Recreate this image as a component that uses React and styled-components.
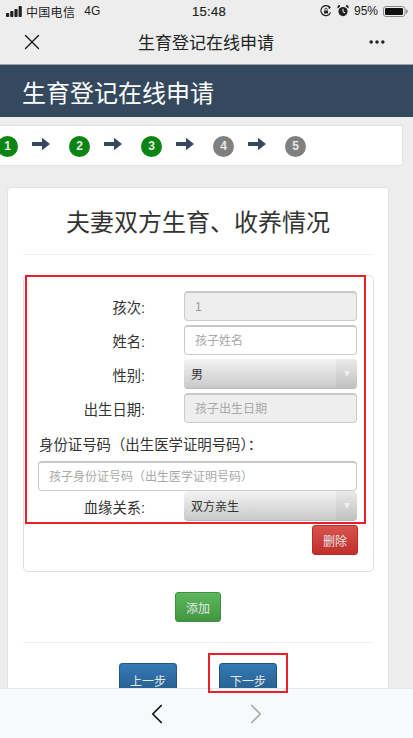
import React from 'react';
import styled, { createGlobalStyle } from 'styled-components';
import { X, MoreHorizontal, ChevronLeft, ChevronRight } from 'lucide-react';

const GlobalStyle = createGlobalStyle`
  html, body {
    margin: 0;
    padding: 0;
    background: #ededed;
  }
  *, *::before, *::after {
    box-sizing: border-box;
  }
  body {
    font-family: "Liberation Sans", "Noto Sans CJK SC", sans-serif;
    color: #333;
  }
`;

const Page = styled.div`
  width: 413px;
  height: 738px;
  display: flex;
  flex-direction: column;
  overflow: hidden;
  background: #ededed;
`;

const StatusBar = styled.div`
  height: 22px;
  padding: 0 5px 0 6px;
  display: grid;
  grid-template-columns: 1fr auto 1fr;
  align-items: center;
  font-size: 12px;
  color: #222;
  flex: none;
`;

const StatusLeft = styled.div`
  display: flex;
  align-items: center;
  gap: 3px;
`;

const Carrier = styled.span`
  margin-right: 6px;
  letter-spacing: 0.3px;
`;

const Clock = styled.div`
  margin-left: 4px;
  font-size: 13px;
  letter-spacing: 0.3px;
  -webkit-text-stroke: 0.2px #222;
`;

const StatusRight = styled.div`
  display: flex;
  align-items: center;
  justify-content: flex-end;
  gap: 5px;
`;

const NavBar = styled.div`
  height: 43px;
  padding: 0 26px 3px 19px;
  display: flex;
  align-items: center;
  justify-content: space-between;
  border-bottom: 1px solid #9aa3ab;
  flex: none;
`;

const NavTitle = styled.div`
  font-size: 17px;
  color: #222;
`;

const Banner = styled.div`
  height: 52px;
  padding: 0 22px;
  display: flex;
  align-items: center;
  background: #34495e;
  color: #fff;
  font-size: 24px;
  flex: none;
`;

const StepsCard = styled.div`
  margin: 8px 10px 0 -6px;
  height: 41px;
  padding-left: 2px;
  display: flex;
  align-items: center;
  background: #fff;
  border: 1px solid #e2e2e2;
  border-radius: 3px;
  flex: none;
`;

const StepItem = styled.div`
  width: 72px;
  display: flex;
  align-items: center;
  gap: 14px;
  margin-top: 1px;
`;

const StepDot = styled.span`
  width: 21px;
  height: 21px;
  border-radius: 50%;
  display: flex;
  align-items: center;
  justify-content: center;
  background: ${({ $done }) => ($done ? '#0a8412' : '#808080')};
  color: #e8e8e8;
  font-size: 12px;
  font-weight: 700;
  flex: none;
`;

const StepArrow = styled.svg`
  width: 18px;
  height: 14px;
  margin-bottom: 5px;
  flex: none;
`;

const Content = styled.div`
  flex: 1;
  min-height: 0;
  padding: 21px 0 0 7px;
`;

const Card = styled.div`
  width: 382px;
  padding: 0 15px;
  background: #fff;
  border: 1px solid #e3e3e3;
  border-radius: 4px 4px 0 0;
`;

const Title = styled.h1`
  margin: 0;
  height: 67px;
  padding-bottom: 2px;
  display: flex;
  align-items: center;
  justify-content: center;
  font-size: 24px;
  font-weight: 400;
  color: #333;
  border-bottom: 1px solid #eee;
`;

const Panel = styled.div`
  margin-top: 20px;
  width: 351px;
  height: 297px;
  border: 1px solid #ddd;
  border-radius: 5px;
`;

const Marked = styled.div`
  margin: -1px 0 0 1px;
  width: 341px;
  height: 249px;
  padding: 14px 6px 0 12px;
  border: 2px solid #e8202c;
`;

const FormRow = styled.div`
  height: 30px;
  margin-bottom: 4px;
  display: grid;
  grid-template-columns: 108px 173px;
  column-gap: 38px;
  align-items: center;
  margin-left: -1px;
`;

const RowLabel = styled.label`
  padding-right: 1px;
  font-size: 14.3px;
  color: #333;
  text-align: right;
`;

const TextInput = styled.input`
  width: 100%;
  height: 30px;
  padding: 0 10px;
  font: 12px "Liberation Sans", "Noto Sans CJK SC", sans-serif;
  color: #999;
  background: ${({ disabled }) => (disabled ? '#eeeeee' : '#fff')};
  border: 1px solid #ccc;
  border-top: 2px solid #c8c8c8;
  border-radius: 4px;
  opacity: 1;
  &::placeholder {
    color: #a8a8a8;
    opacity: 1;
  }
`;

const SelectBox = styled.div`
  height: 30px;
  padding-left: 7px;
  display: flex;
  align-items: center;
  justify-content: space-between;
  font-size: 12px;
  color: #333;
  background: linear-gradient(#f4f4f4, #c9c9c9);
  border-radius: 4px;
  border-bottom: 1px solid #bbb;
`;

const SelectCaret = styled.span`
  width: 21px;
  height: 100%;
  display: flex;
  align-items: center;
  justify-content: center;
  background: rgba(0, 0, 0, 0.04);
  border-radius: 0 4px 4px 0;
  &::after {
    content: "";
    border-left: 3.5px solid transparent;
    border-right: 3.5px solid transparent;
    border-top: 6px solid #efefef;
  }
`;

const WideLabel = styled.div`
  margin: 6px 0 3px 0;
  height: 29px;
  font-size: 14.4px;
  color: #333;
  display: flex;
  align-items: center;
`;

const WideInput = styled(TextInput)`
  display: block;
  width: 319px;
  margin-left: -1px;
  height: 30px;
`;

const LastRow = styled(FormRow)`
  margin-top: 0;
  margin-bottom: 0;
`;

const ActionRow = styled.div`
  display: flex;
  justify-content: flex-end;
  padding: 1px 15px 0 0;
`;

const PrimaryRow = styled.div`
  display: flex;
  justify-content: center;
  padding: 20px 0;
  border-bottom: 1px solid #eee;
`;

const Btn = styled.button`
  width: ${({ $wide }) => ($wide ? '58px' : '46px')};
  height: ${({ $wide }) => ($wide ? '34px' : '30px')};
  padding: 0;
  font: 12px "Liberation Sans", "Noto Sans CJK SC", sans-serif;
  color: #e6e6e6;
  border: 1px solid ${({ $border }) => $border};
  border-radius: 3px;
  background: linear-gradient(${({ $from }) => $from}, ${({ $to }) => $to});
`;

const PagerRow = styled.div`
  display: flex;
  gap: 42px;
  padding: 20px 0 0 96px;
`;

// the red note drawn on the screenshot, it also lies over the bottom bar
const MarkedNext = styled.div`
  position: relative;
  &::after {
    content: "";
    position: absolute;
    top: -10px;
    left: -11px;
    width: 80px;
    height: 40px;
    border: 2px solid #e8202c;
    z-index: 2;
    pointer-events: none;
  }
`;

const BottomBar = styled.div`
  height: 50px;
  padding-left: 140px;
  display: flex;
  align-items: center;
  gap: 65px;
  background: #f8f9fb;
  border-top: 1px solid #e6e6e6;
  flex: none;
  position: relative;
  z-index: 1;
`;

const signalBars = [4, 6, 8, 11];

const SignalIcon = () => (
  <svg width="17" height="11" viewBox="0 0 17 11">
    {signalBars.map((h, i) => (
      <rect key={h} x={i * 4.2} y={11 - h} width="3.2" height={h} rx="0.8" fill="#222" />
    ))}
  </svg>
);

const LockIcon = () => (
  <svg width="12" height="12" viewBox="0 0 12 12" fill="none" stroke="#222">
    <path d="M10.6 7.4A5 5 0 1 1 9.8 2.4" strokeWidth="1.2" />
    <path d="M8.6 1.2l2 1.2-1.6 1.6z" fill="#222" strokeWidth="0.4" />
    <rect x="4" y="5.4" width="4" height="3" rx="0.5" fill="#222" stroke="none" />
    <path d="M4.8 5.4V4.4a1.2 1.2 0 0 1 2.4 0v1" strokeWidth="0.8" />
  </svg>
);

const AlarmIcon = () => (
  <svg width="12" height="12" viewBox="0 0 12 12">
    <circle cx="6" cy="6.6" r="4.6" fill="#222" />
    <path d="M6 3.8v3l2 1" stroke="#fff" strokeWidth="1" fill="none" />
    <path d="M0.8 3L3 0.9 1.4 0.6zM11.2 3L9 0.9l1.6-.3z" fill="#222" stroke="#222" />
  </svg>
);

const BatteryIcon = () => (
  <svg width="25" height="11" viewBox="0 0 25 11">
    <rect x="0.5" y="0.5" width="21.5" height="10" rx="2.5" fill="none" stroke="#888" />
    <rect x="2" y="2" width="18" height="7" rx="1.2" fill="#111" />
    <rect x="23" y="3.5" width="1.5" height="4" rx="0.7" fill="#888" />
  </svg>
);

const ArrowIcon = () => (
  <StepArrow viewBox="0 0 18 14">
    <path d="M0 5h10V0.8L18 7l-8 6.2V9H0z" fill="#34495e" />
  </StepArrow>
);

const steps = [
  { n: 1, done: true },
  { n: 2, done: true },
  { n: 3, done: true },
  { n: 4, done: false },
  { n: 5, done: false },
];

const blue = { $from: '#337ab7', $to: '#265a88', $border: '#245580' };
const green = { $from: '#5cb85c', $to: '#419641', $border: '#3e8f3e' };
const red = { $from: '#d9534f', $to: '#c12e2a', $border: '#b92c28' };

const Field = ({ label, children }) => (
  <FormRow>
    <RowLabel>{label}:</RowLabel>
    {children}
  </FormRow>
);

const Select = ({ value }) => (
  <SelectBox>
    <span>{value}</span>
    <SelectCaret />
  </SelectBox>
);

export default function App() {
  return (
    <Page>
      <GlobalStyle />
      <StatusBar>
        <StatusLeft>
          <SignalIcon />
          <Carrier>中国电信</Carrier>
          <span>4G</span>
        </StatusLeft>
        <Clock>15:48</Clock>
        <StatusRight>
          <LockIcon />
          <AlarmIcon />
          <span>95%</span>
          <BatteryIcon />
        </StatusRight>
      </StatusBar>
      <NavBar>
        <X size={26} strokeWidth={1.2} color="#111" />
        <NavTitle>生育登记在线申请</NavTitle>
        <MoreHorizontal size={20} strokeWidth={2.2} color="#222" />
      </NavBar>
      <Banner>生育登记在线申请</Banner>
      <StepsCard>
        {steps.map(({ n, done }) => (
          <StepItem key={n}>
            <StepDot $done={done}>{n}</StepDot>
            {n < 5 && <ArrowIcon />}
          </StepItem>
        ))}
      </StepsCard>
      <Content>
        <Card>
          <Title>夫妻双方生育、收养情况</Title>
          <Panel>
            <Marked>
              <Field label="孩次">
                <TextInput disabled value="1" readOnly />
              </Field>
              <Field label="姓名">
                <TextInput placeholder="孩子姓名" />
              </Field>
              <Field label="性别">
                <Select value="男" />
              </Field>
              <Field label="出生日期">
                <TextInput disabled placeholder="孩子出生日期" />
              </Field>
              <WideLabel>身份证号码（出生医学证明号码）：</WideLabel>
              <WideInput placeholder="孩子身份证号码（出生医学证明号码）" />
              <LastRow>
                <RowLabel>血缘关系:</RowLabel>
                <Select value="双方亲生" />
              </LastRow>
            </Marked>
            <ActionRow>
              <Btn {...red}>删除</Btn>
            </ActionRow>
          </Panel>
          <PrimaryRow>
            <Btn {...green}>添加</Btn>
          </PrimaryRow>
          <PagerRow>
            <Btn $wide {...blue}>上一步</Btn>
            <MarkedNext>
              <Btn $wide {...blue}>下一步</Btn>
            </MarkedNext>
          </PagerRow>
        </Card>
      </Content>
      <BottomBar>
        <ChevronLeft size={34} strokeWidth={1.2} color="#111" />
        <ChevronRight size={34} strokeWidth={1.2} color="#aaa" />
      </BottomBar>
    </Page>
  );
}
